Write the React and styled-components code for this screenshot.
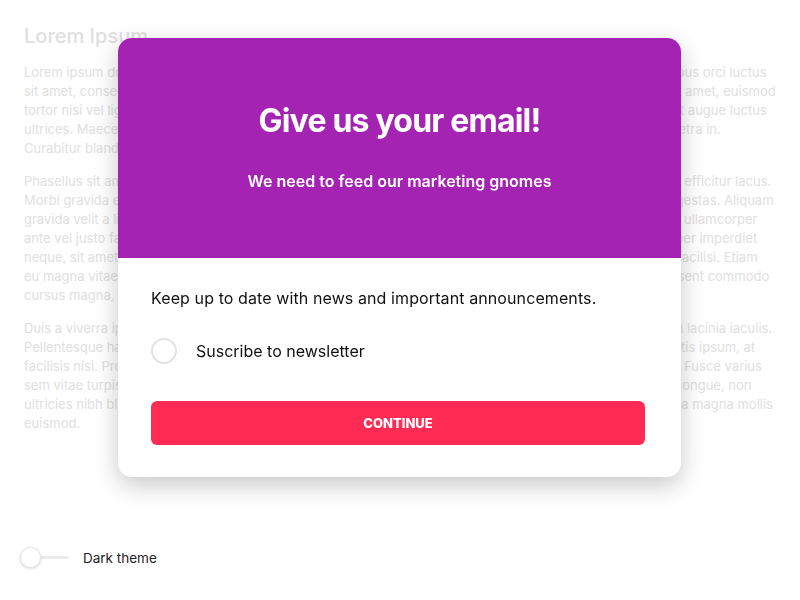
import { useState } from 'react';
import styled, { createGlobalStyle } from 'styled-components';

const GlobalStyle = createGlobalStyle`
    * {
        box-sizing: border-box;
    }
    body {
        margin: 0;
        background: #ffffff;
        font-family: Inter, 'Noto Sans', 'Liberation Sans', sans-serif;
    }
`;

const paragraphs = [
    'Lorem ipsum dolor sit amet, consectetur adipiscing elit. Nulla facilisi. Vestibulum ante ipsum primis in faucibus orci luctus sit amet, consectetur adipiscing elit. Donec mollis, nunc sed tincidunt ultrices, magna lacus suscipit nibh sit amet, euismod tortor nisi vel ligula. Cras vel lorem a nulla fringilla tincidunt ut, hendrerit pulvinar quam. Integer ac sem eget augue luctus ultrices. Maecenas vitae pretium nunc, vitae dapibus. Sed tristique scelerisque nunc, et viverra ipsum pharetra in. Curabitur blandit tempus porttitor, donec sed odio dui.',
    'Phasellus sit amet lorem nec odio faucibus ultricies. Curabitur gravida ligula nec nibh tristique, non aliquam efficitur lacus. Morbi gravida ex in diam scelerisque, ut tempor leo vehicula. Donec ac fermentum diam, non fermentum egestas. Aliquam gravida velit a ligula pulvinar, in dapibus lectus ornare. Nam sed ipsum vitae massa blandit finibus. Quisque ullamcorper ante vel justo facilisis, sed feugiat arcu imperdiet. Vivamus vel lectus vitae turpis ornare. Quisque ullamcorper imperdiet neque, sit amet congue ipsum. Ut at sapien non dui tempor posuere et vel felis ante sagittis sit amet. Nulla facilisi. Etiam eu magna vitae erat rhoncus convallis nec vel augue, sed malesuada interdum. Aliquam erat volutpat. Praesent commodo cursus magna, vel scelerisque nisl consectetur et.',
    'Duis a viverra ipsum. Sed consequat, lectus sed tempus interdum, lorem mi aliquet orci, eget pretium ipsum lacinia iaculis. Pellentesque habitant morbi tristique senectus et netus et malesuada fames ac turpis. Vestibulum vitae mattis ipsum, at facilisis nisi. Proin dictum lacus nec risus hendrerit, quis ultrices tortor sodales enim. Nam a dignissim nibh. Fusce varius sem vitae turpis tincidunt, at vehicula lectus tempus, nisl ut convallis posuere. Nam iaculis justo nec tellus congue, non ultricies nibh blandit. Mauris facilisis sem feugiat ullamcorper, vitae rhoncus est. Etiam porta sem malesuada magna mollis euismod.',
];

const App = () => {
    const [subscribed, setSubscribed] = useState(false);
    const [dark, setDark] = useState(false);

    return (
        <>
            <GlobalStyle />
            <S.Page>
                <S.Heading>Lorem Ipsum</S.Heading>
                {paragraphs.map((text, i) => (
                    <S.Paragraph key={i}>{text}</S.Paragraph>
                ))}
                <S.ThemeRow onClick={() => setDark(!dark)}>
                    <S.Toggle>
                        <S.Track />
                        <S.Thumb $on={dark} />
                    </S.Toggle>
                    <S.ThemeLabel>Dark theme</S.ThemeLabel>
                </S.ThemeRow>
            </S.Page>

            {/* 이메일 모달 */}
            <S.Overlay>
                <S.Modal>
                    <S.Header>
                        <S.Title>Give us your email!</S.Title>
                        <S.Subtitle>We need to feed our marketing gnomes</S.Subtitle>
                    </S.Header>
                    <S.Body>
                        <S.Text>Keep up to date with news and important announcements.</S.Text>
                        <S.RadioRow onClick={() => setSubscribed(!subscribed)}>
                            <S.Radio $checked={subscribed} />
                            <S.RadioLabel>Suscribe to newsletter</S.RadioLabel>
                        </S.RadioRow>
                        <S.Button type="button">CONTINUE</S.Button>
                    </S.Body>
                </S.Modal>
            </S.Overlay>
        </>
    );
};

export default App;

const Page = styled.div`
    min-height: 100vh;
    display: flex;
    flex-direction: column;
    padding: 24px 24px 32px;
`;

const Heading = styled.h1`
    margin: 0 0 15px;
    font-size: 20px;
    line-height: 24px;
    font-weight: 500;
    color: #e0e0e0;
`;

const Paragraph = styled.p`
    margin: 0 0 14px;
    font-size: 13px;
    line-height: 19px;
    color: #e0e0e0;
`;

const ThemeRow = styled.div`
    margin-top: auto;
    margin-left: -4px;
    display: flex;
    align-items: center;
    gap: 14px;
    cursor: pointer;
`;

const Toggle = styled.div`
    position: relative;
    width: 49px;
    height: 21px;
    display: flex;
    align-items: center;
`;

const Track = styled.div`
    width: 100%;
    height: 3px;
    border-radius: 2px;
    background: #ececec;
`;

const Thumb = styled.div`
    position: absolute;
    top: 0;
    left: ${(p) => (p.$on ? '28px' : '0')};
    width: 21px;
    height: 21px;
    border-radius: 50%;
    background: #ffffff;
    border: 1px solid #e4e4e4;
    box-shadow: 0 1px 3px rgb(0 0 0 / 15%);
`;

const ThemeLabel = styled.span`
    font-size: 13.5px;
    color: #222222;
`;

const Overlay = styled.div`
    position: fixed;
    inset: 0;
    display: flex;
    justify-content: center;
    align-items: flex-start;
    padding-top: 38px;
    pointer-events: none;
`;

const Modal = styled.div`
    width: 563px;
    margin-right: 1px;
    border-radius: 14px;
    overflow: hidden;
    background: #ffffff;
    box-shadow: 0 8px 24px rgb(0 0 0 / 22%);
    pointer-events: auto;
`;

const Header = styled.div`
    height: 220px;
    padding-top: 63px;
    display: flex;
    flex-direction: column;
    align-items: center;
    background: #a523b3;
    color: #ffffff;
`;

const Title = styled.h2`
    margin: 0 0 30px;
    font-size: 32px;
    line-height: 40px;
    font-weight: 700;
    letter-spacing: -0.8px;
`;

const Subtitle = styled.div`
    font-size: 16px;
    line-height: 20px;
    font-weight: 600;
`;

const Body = styled.div`
    padding: 29px 36px 32px 33px;
    display: flex;
    flex-direction: column;
`;

const Text = styled.p`
    margin: 0;
    font-size: 16px;
    line-height: 22px;
    letter-spacing: 0.1px;
    color: #111111;
`;

const RadioRow = styled.label`
    margin-top: 29px;
    display: flex;
    align-items: center;
    gap: 19px;
    cursor: pointer;
`;

const Radio = styled.span`
    width: 26px;
    height: 26px;
    border-radius: 50%;
    border: 2px solid #e2e2ea;
    background: ${(p) => (p.$checked ? '#a523b3' : '#ffffff')};
`;

const RadioLabel = styled.span`
    font-size: 16px;
    color: #111111;
`;

const Button = styled.button`
    margin-top: 37px;
    height: 44px;
    border: none;
    border-radius: 6px;
    background: #ff2b55;
    color: #ffffff;
    font-family: inherit;
    font-size: 13px;
    font-weight: 800;
    cursor: pointer;
`;

const S = {
    Page,
    Heading,
    Paragraph,
    ThemeRow,
    Toggle,
    Track,
    Thumb,
    ThemeLabel,
    Overlay,
    Modal,
    Header,
    Title,
    Subtitle,
    Body,
    Text,
    RadioRow,
    Radio,
    RadioLabel,
    Button,
};
